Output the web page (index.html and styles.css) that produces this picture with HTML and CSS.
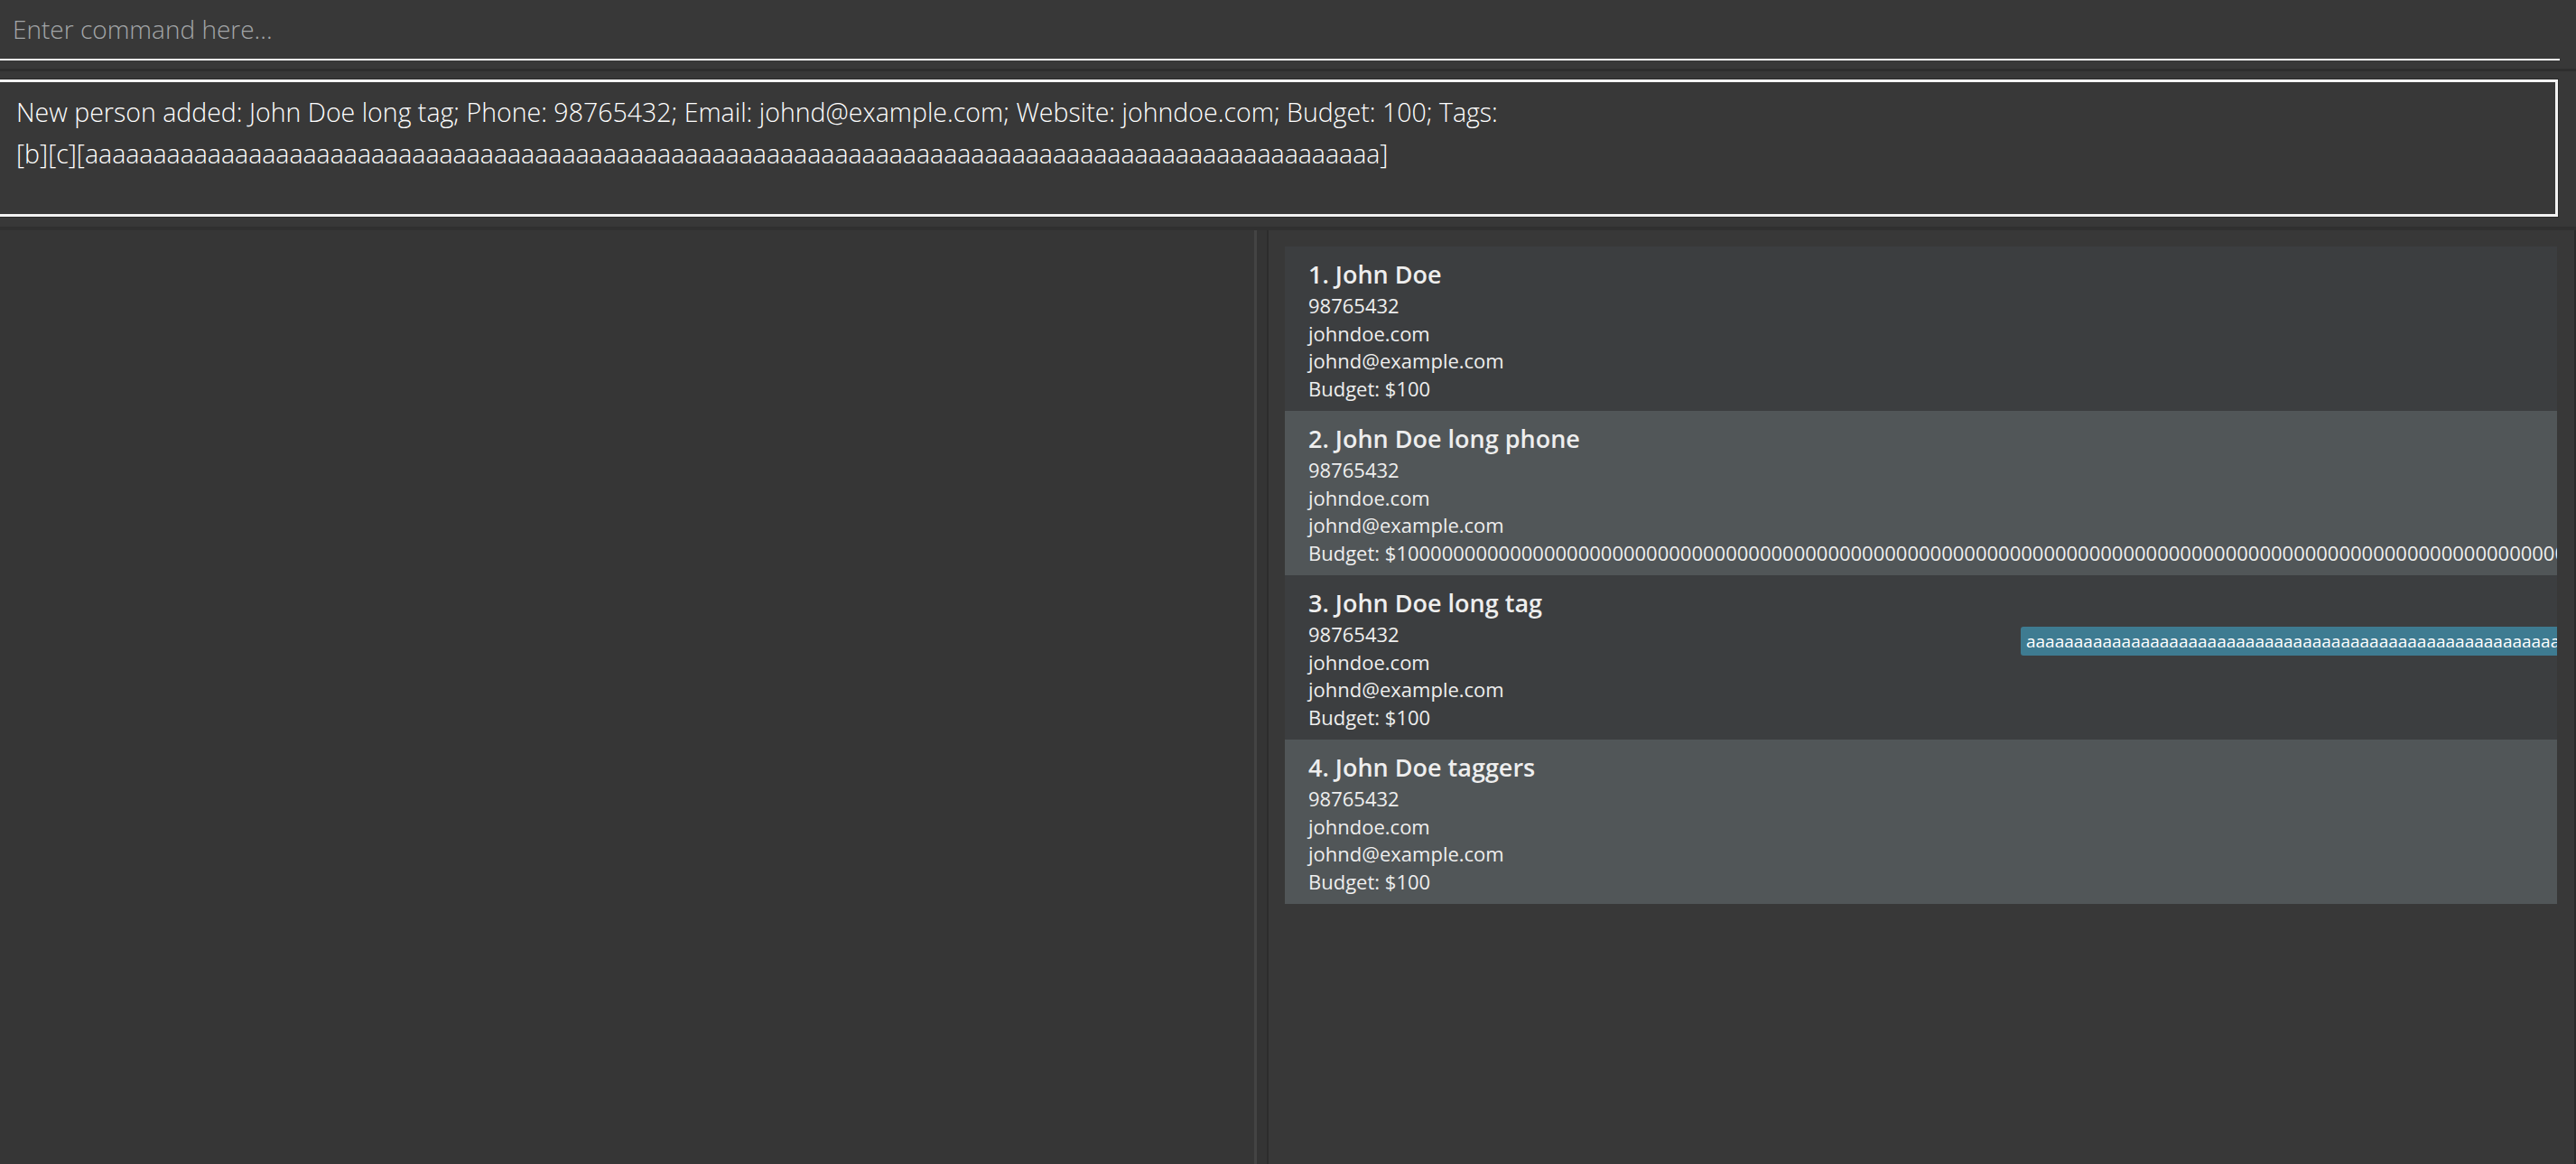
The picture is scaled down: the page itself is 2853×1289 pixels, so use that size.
FILE: index.html
```html
<!DOCTYPE html>
<html>
<head>
<meta charset="utf-8">
<title>Address App</title>
<link rel="stylesheet" href="styles.css">
</head>
<body>
<div class="app">
  <div class="command-row">
    <div class="command-box"><span class="placeholder">Enter command here...</span></div>
  </div>
  <div class="sep"></div>
  <div class="result-row">
    <div class="result-box">
      <div class="result-line">New person added: John Doe long tag; Phone: 98765432; Email: johnd@example.com; Website: johndoe.com; Budget: 100; Tags:</div>
      <div class="result-line">[b][c][aaaaaaaaaaaaaaaaaaaaaaaaaaaaaaaaaaaaaaaaaaaaaaaaaaaaaaaaaaaaaaaaaaaaaaaaaaaaaaaaaaaaaaaaaaaaaaa]</div>
    </div>
  </div>
  <div class="sep sep-bottom"></div>
  <div class="split">
    <div class="left-pane"></div>
    <div class="divider"></div>
    <div class="right-pane">
      <div class="list">
        <div class="card card-even">
          <div class="details">
            <div class="name">1. John Doe</div>
            <div class="field">98765432</div>
            <div class="field">johndoe.com</div>
            <div class="field">johnd@example.com</div>
            <div class="field">Budget: $100</div>
          </div>
        </div>
        <div class="card card-odd">
          <div class="details">
            <div class="name">2. John Doe long phone</div>
            <div class="field">98765432</div>
            <div class="field">johndoe.com</div>
            <div class="field">johnd@example.com</div>
            <div class="field">Budget: $1000000000000000000000000000000000000000000000000000000000000000000000000000000000000000000000000000000000000000000000000</div>
          </div>
        </div>
        <div class="card card-even">
          <div class="details">
            <div class="name">3. John Doe long tag</div>
            <div class="field">98765432</div>
            <div class="field">johndoe.com</div>
            <div class="field">johnd@example.com</div>
            <div class="field">Budget: $100</div>
          </div>
          <div class="tags">
            <span class="tag">aaaaaaaaaaaaaaaaaaaaaaaaaaaaaaaaaaaaaaaaaaaaaaaaaaaaaaaaaaaaaaaaaaaaaaaaaaaaaaaaaaaaaaaaaaaa</span>
          </div>
        </div>
        <div class="card card-odd">
          <div class="details">
            <div class="name">4. John Doe taggers</div>
            <div class="field">98765432</div>
            <div class="field">johndoe.com</div>
            <div class="field">johnd@example.com</div>
            <div class="field">Budget: $100</div>
          </div>
        </div>
      </div>
    </div>
  </div>
</div>
</body>
</html>
```
FILE: styles.css
```css
html, body {
  margin: 0;
  padding: 0;
  background: #383838;
  overflow: hidden;
}
.app {
  width: 2853px;
  height: 1289px;
  display: flex;
  flex-direction: column;
  overflow: hidden;
  font-family: "Open Sans", "Noto Sans", sans-serif;
}
.command-row {
  height: 67px;
  padding-right: 18px;
  flex: none;
}
.command-box {
  height: 65px;
  border-bottom: 2px solid #f4f4f4;
  padding-left: 14px;
  display: flex;
  align-items: center;
}
.placeholder {
  font-size: 28px;
  font-weight: 300;
  color: #a3a6a8;
  margin-top: -2px;
}
.sep {
  flex: none;
  height: 3px;
  background: #2e2e2e;
  margin-top: 9px;
}
.result-row {
  flex: none;
  padding: 9px 20px 0 0;
  height: 161px;
  box-sizing: border-box;
}
.result-box {
  box-sizing: border-box;
  height: 152px;
  margin-left: -3px;
  border: 3px solid #f2f2f2;
  box-shadow: 0 0 0 1px #2a2a2a;
  padding: 10px 0 0 18px;
  color: #ffffff;
  font-size: 28.5px;
  font-weight: 300;
  line-height: 46px;
  white-space: nowrap;
}
.sep-bottom {
  margin-top: 11px;
  height: 4px;
  background: #303030;
}
.split {
  flex: 1;
  display: flex;
  min-height: 0;
}
.left-pane {
  width: 1389px;
  flex: none;
  background: #363636;
}
.divider {
  width: 16px;
  flex: none;
  background: #343434;
  border-left: 3px solid #444444;
  border-right: 2px solid #2c2c2c;
  box-sizing: border-box;
}
.right-pane {
  flex: 1;
  min-width: 0;
  padding: 18px 19px 0 18px;
  border-right: 2px solid #2a2a2a;
  background: #383838;
}
.list {
  display: flex;
  flex-direction: column;
}
.card {
  height: 182px;
  box-sizing: border-box;
  padding: 11px 0 0 26px;
  display: flex;
  overflow: hidden;
  color: #eeeeee;
}
.card-even { background: #3c3e40; }
.card-odd { background: #515658; }
.details {
  width: 789px;
  flex: none;
  white-space: nowrap;
}
.name {
  font-size: 27px;
  font-weight: 600;
  line-height: 39px;
}
.field {
  font-size: 22px;
  font-weight: 400;
  line-height: 30.5px;
}
.tags {
  flex: none;
  padding-top: 46px;
}
.tag {
  display: inline-block;
  height: 32px;
  line-height: 32px;
  padding: 0 6px;
  background: #3e7b91;
  color: #ffffff;
  font-size: 19px;
  border-radius: 3px;
  white-space: nowrap;
}
```
